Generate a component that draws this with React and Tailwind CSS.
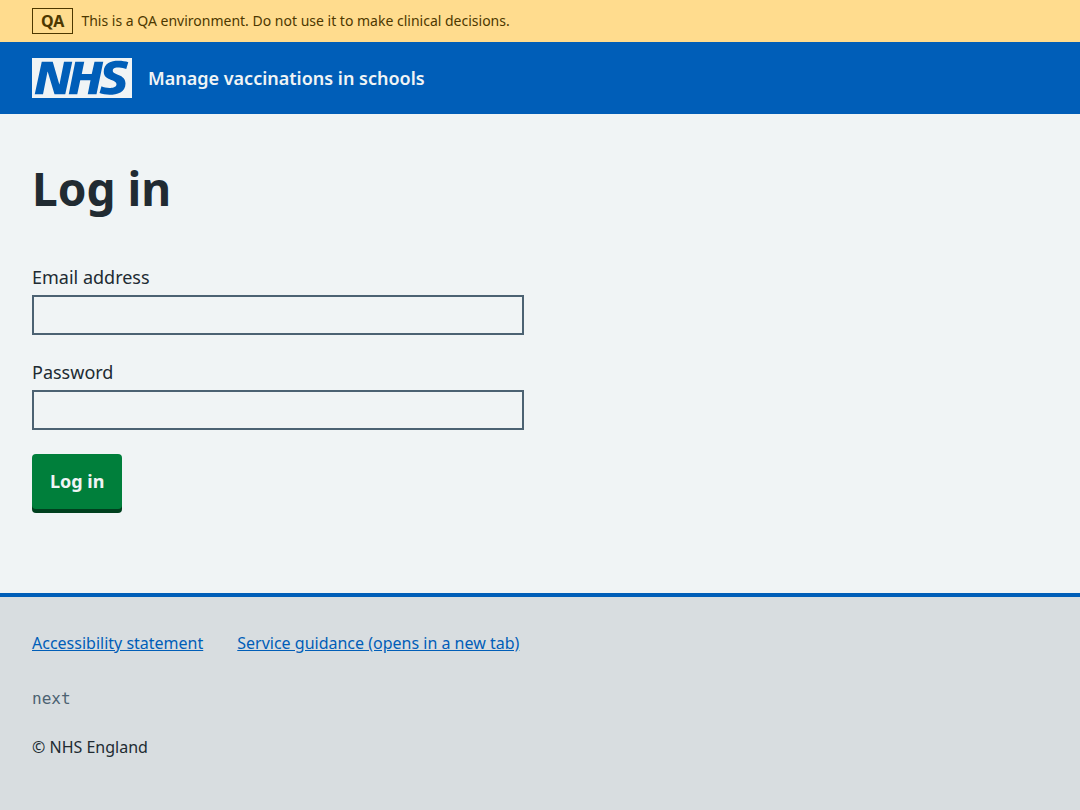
function NhsLogo() {
  return (
    <svg role="img" aria-label="NHS" viewBox="0 0 200 80" className="h-10 w-[100px] shrink-0">
      <path
        fill="#f0f4f5"
        d="M200 0v80H0V0h200Zm-27.5 5.5c-14.5 0-29 5-29 22 0 10.2 7.7 13.5 14.7 16.3l.7.3c5.4 2 10.1 3.9 10.1 8.4 0 6.5-8.5 7.5-14 7.5s-12.5-1.5-16-3.5L135 70c5.5 2 13.5 3.5 20 3.5 15.5 0 32-4.5 32-22.5 0-19.5-25.5-16.5-25.5-25.5 0-5.5 5.5-6.5 12.5-6.5a35 35 0 0 1 14.5 3l4-13.5c-4.5-2-12-3-20-3Zm-131 2h-22l-14 65H22l9-45h.5l13.5 45h21.5l14-65H64l-9 45h-.5l-13-45Zm63 0h-18l-13 65h17l6-28H117l-5.5 28H129l13.5-65H125L119.5 32h-20l5-24.5Z"
      />
    </svg>
  );
}

function Field({ id, label, type }) {
  return (
    <div className="mb-6">
      <label htmlFor={id} className="mb-1 block text-[18px] leading-[27px]">
        {label}
      </label>
      <input
        id={id}
        name={id}
        type={type}
        className="block h-10 w-full max-w-[492px] border-2 border-[#4c6272] bg-[#f0f4f5] px-1 text-[18px] outline-offset-0 focus:outline-4 focus:outline-[#ffeb3b]"
      />
    </div>
  );
}

export default function App() {
  return (
    <div className="flex min-h-screen flex-col bg-[#f0f4f5] font-['Noto_Sans','Open_Sans',sans-serif] text-[#212b32]">
      <div className="flex items-center gap-2 bg-[#ffdc8e] px-8 py-2 text-[#4d3800]">
        <strong className="border border-[#4d3800] px-2 text-[16px] leading-6 font-bold">QA</strong>
        <span className="text-[14px] leading-6">
          This is a QA environment. Do not use it to make clinical decisions.
        </span>
      </div>

      <header className="flex items-center gap-4 bg-[#005eb8] px-8 py-4 text-[#f0f4f5]">
        <NhsLogo />
        <a href="#" className="text-[18px] leading-[27px] font-semibold">
          Manage vaccinations in schools
        </a>
      </header>

      <main className="px-8 pt-12 pb-20">
        <h1 className="mb-[50px] text-[46px] leading-[52px] font-bold">Log in</h1>
        <form onSubmit={(event) => event.preventDefault()}>
          <Field id="email" label="Email address" type="email" />
          <Field id="password" label="Password" type="password" />
          <button
            type="submit"
            className="mb-1 block rounded-[4px] bg-[#007f3b] px-[18px] py-[14px] text-[18px] leading-[27px] font-bold text-[#f0f4f5] shadow-[0_4px_0_#00401e]"
          >
            Log in
          </button>
        </form>
      </main>

      <footer className="grow border-t-4 border-[#005eb8] bg-[#d8dde0] px-8 pt-[34px] pb-12 text-[16px] leading-6">
        <ul className="mb-8 flex flex-wrap gap-x-[34px] gap-y-2">
          <li>
            <a href="#" className="text-[#005eb8] underline">Accessibility statement</a>
          </li>
          <li>
            <a href="#" className="text-[#005eb8] underline">Service guidance (opens in a new tab)</a>
          </li>
        </ul>
        <p className="mb-6 font-['DejaVu_Sans_Mono',monospace] text-[#4c6272]">next</p>
        <p>© NHS England</p>
      </footer>
    </div>
  );
}
